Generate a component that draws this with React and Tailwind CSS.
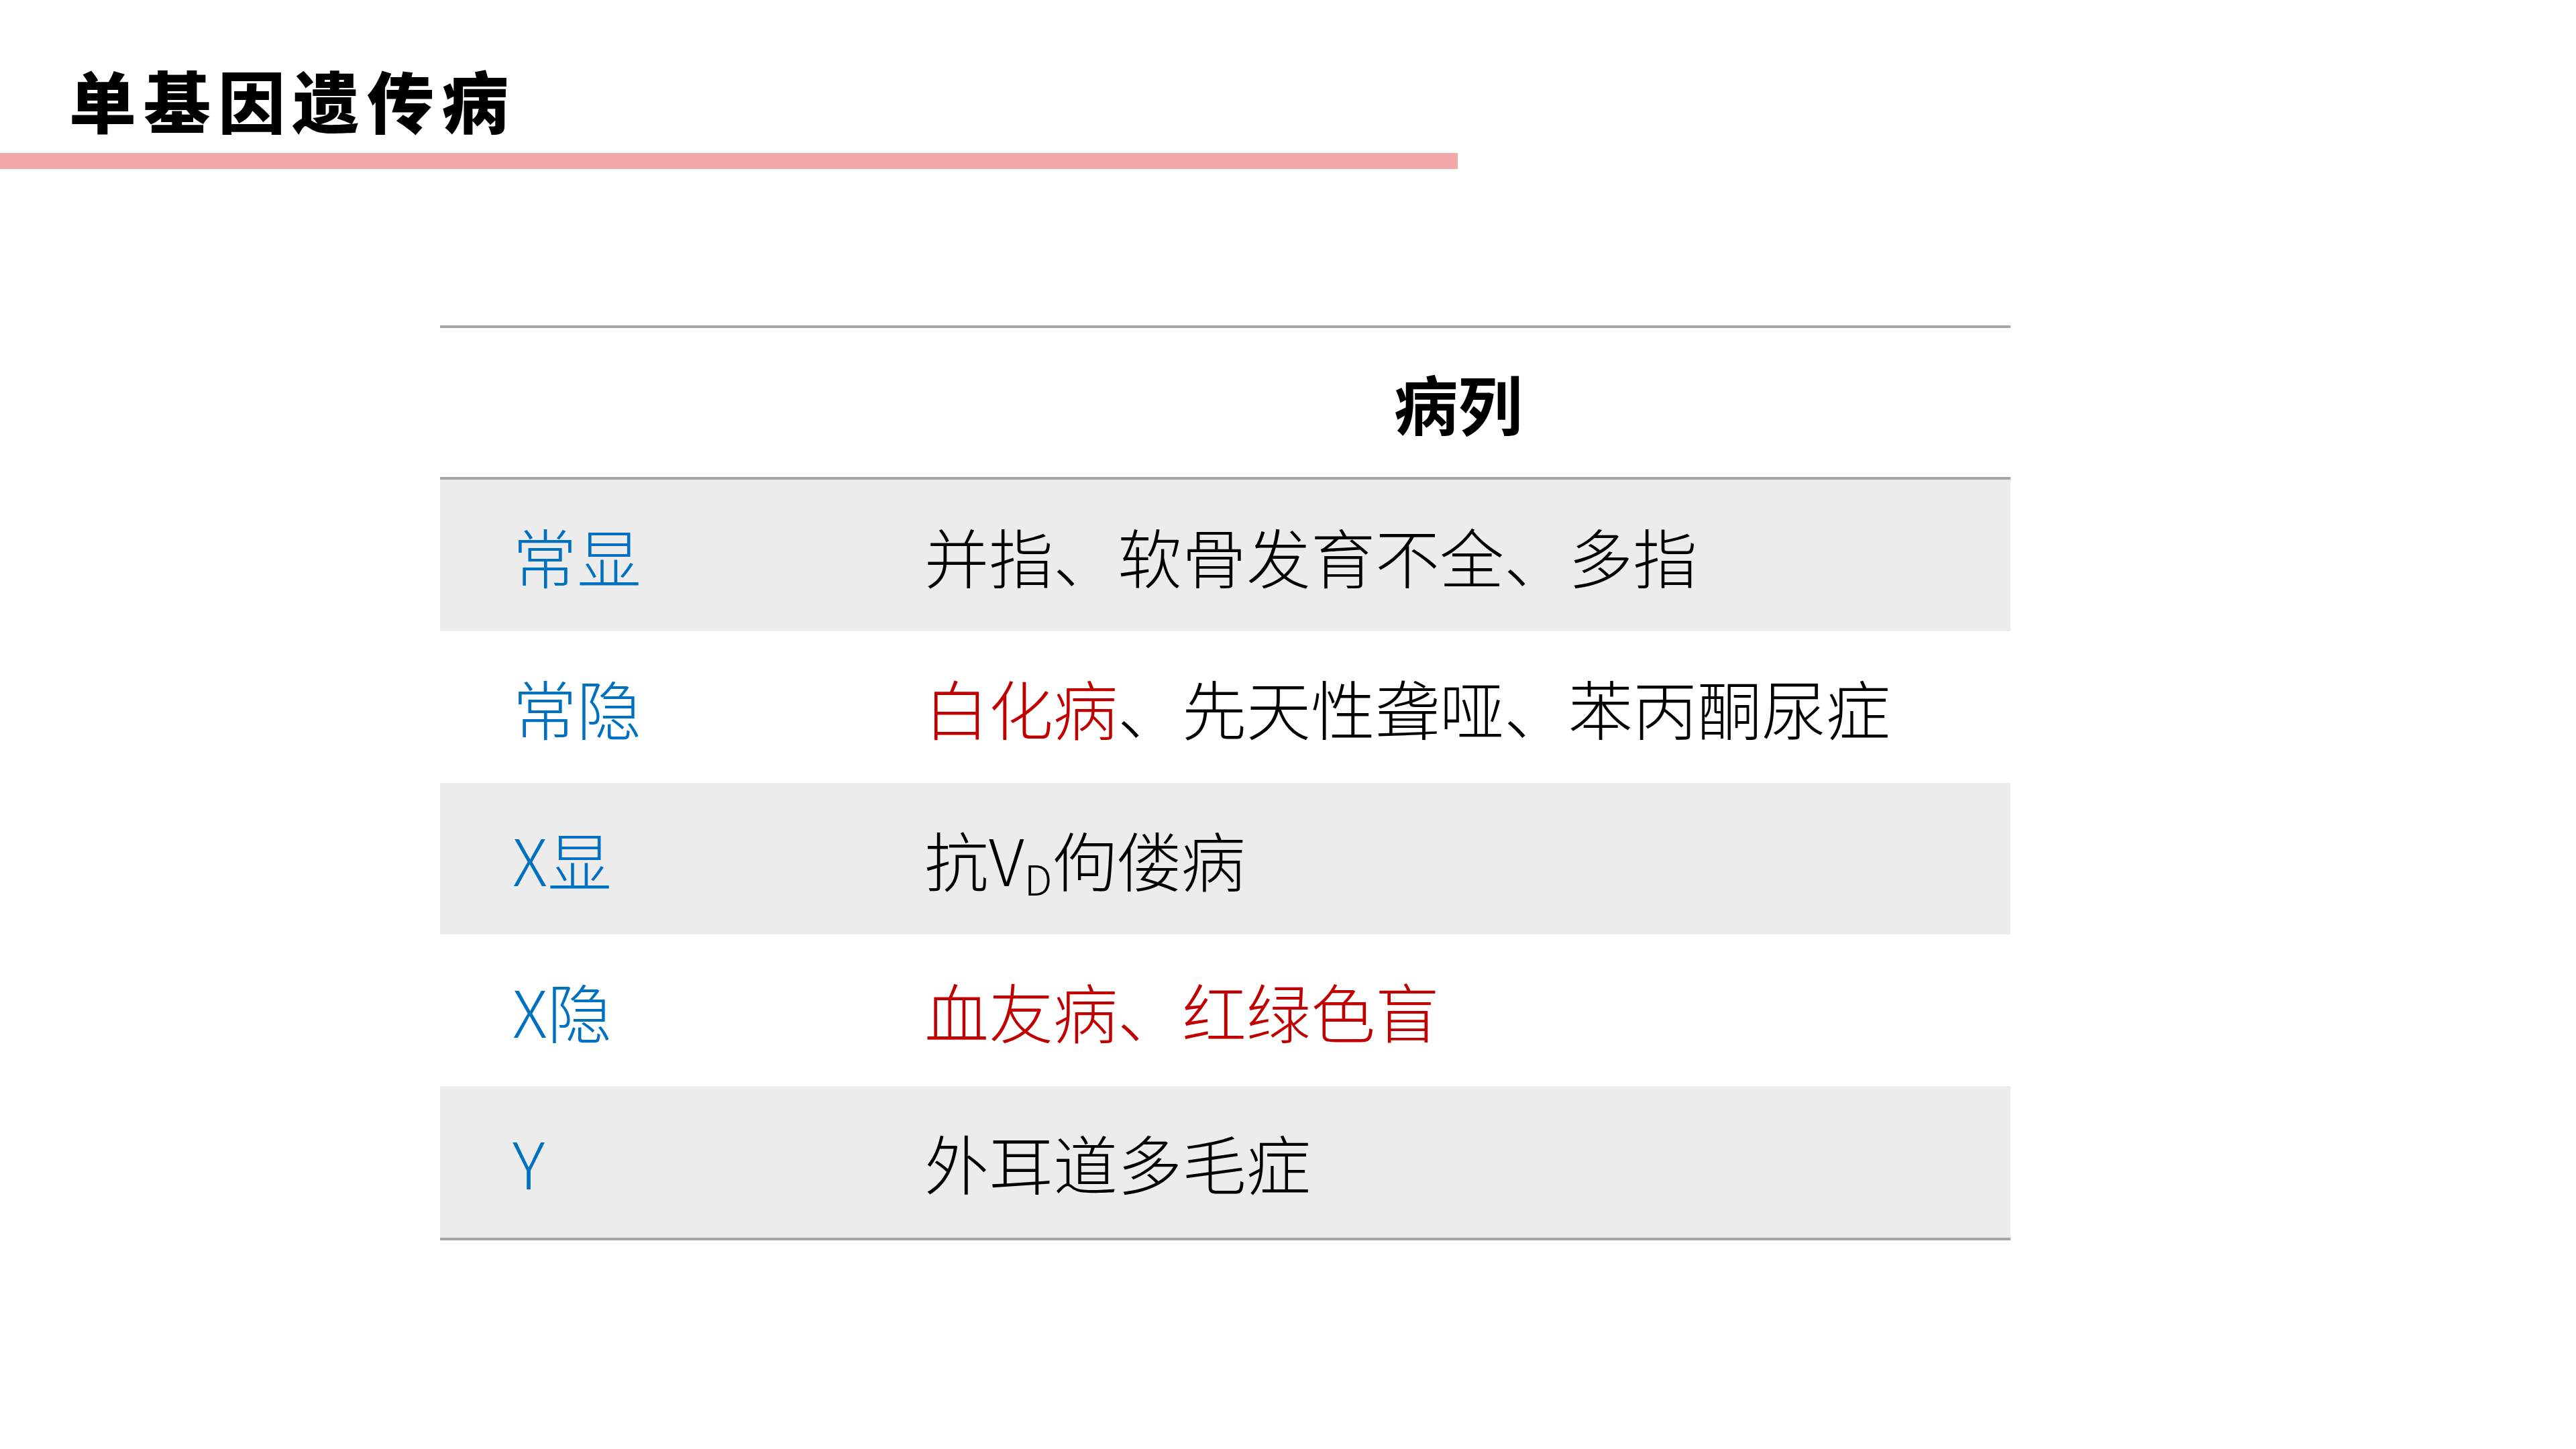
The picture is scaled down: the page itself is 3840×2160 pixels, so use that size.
export default function App() {
  const font = { fontFamily: '"Noto Sans CJK SC", "Noto Sans", sans-serif' };
  const blue = "text-[#0070c0]";
  const red = "text-[#c00000]";
  const rows = [
    {
      k: "常显",
      bg: "bg-[#ececec]",
      v: <span className="text-black">并指、软骨发育不全、多指</span>,
    },
    {
      k: "常隐",
      bg: "bg-white",
      v: (
        <span className="text-black">
          <span className={red}>白化病</span>、先天性聋哑、苯丙酮尿症
        </span>
      ),
    },
    {
      k: "X显",
      bg: "bg-[#ececec]",
      v: (
        <span className="text-black">
          抗V<sub className="text-[62px] relative top-[14px] align-baseline">D</sub>佝偻病
        </span>
      ),
    },
    {
      k: "X隐",
      bg: "bg-white",
      v: <span className={red}>血友病、红绿色盲</span>,
    },
    {
      k: "Y",
      bg: "bg-[#ececec]",
      v: <span className="text-black">外耳道多毛症</span>,
    },
  ];
  return (
    <div className="w-[3840px] h-[2160px] bg-white overflow-hidden" style={font}>
      <div className="pt-[98px] pl-[103px]">
        <div className="text-[100px] leading-none font-black tracking-[11px] text-black">
          单基因遗传病
        </div>
      </div>
      <div className="mt-[30px] h-[24px] w-[2173px] bg-[#f2a8a9]" />
      <div className="mt-[233px] ml-[656px] w-[2341px] border-t-4 border-b-4 border-[#a6a6a6]">
        <div className="grid grid-cols-[694px_1fr] h-[226px] border-b-4 border-[#a6a6a6] bg-white">
          <div />
          <div className="flex items-center justify-center text-[96px] font-bold text-black leading-none">
            病列
          </div>
        </div>
        {rows.map((r, i) => (
          <div key={i} className={`grid grid-cols-[694px_1fr] h-[226px] ${r.bg}`}>
            <div className={`flex items-center pl-[108px] text-[96px] font-light leading-none ${blue}`}>{r.k}</div>
            <div className="flex items-center pl-[28px] text-[96px] font-light leading-none">{r.v}</div>
          </div>
        ))}
      </div>
    </div>
  );
}
